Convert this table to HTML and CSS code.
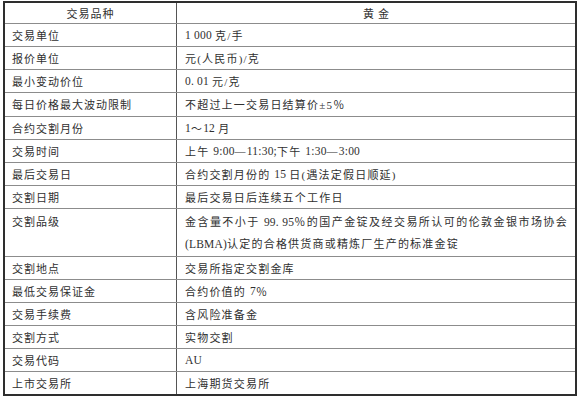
FILE: index.html
```html
<!DOCTYPE html>
<html lang="zh-CN">
<head>
<meta charset="utf-8">
<title>黄金期货合约</title>
<link rel="stylesheet" href="styles.css">
</head>
<body>
<div class="spec">
  <div class="row head"><div class="k">交易品种</div><div class="v gold">黄金</div></div>
  <div class="row"><div class="k">交易单位</div><div class="v"><span class="lat">1 000 </span>克/手</div></div>
  <div class="row"><div class="k">报价单位</div><div class="v">元(人民币)/克</div></div>
  <div class="row"><div class="k">最小变动价位</div><div class="v"><span class="lat">0. 01 </span>元/克</div></div>
  <div class="row"><div class="k">每日价格最大波动限制</div><div class="v">不超过上一交易日结算价±5％</div></div>
  <div class="row"><div class="k">合约交割月份</div><div class="v"><span class="lat">1</span>～<span class="lat">12 </span>月</div></div>
  <div class="row"><div class="k">交易时间</div><div class="v">上午 <span class="lat">9:00</span>—<span class="lat">11:30;</span>下午 <span class="lat">1:30</span>—<span class="lat">3:00</span></div></div>
  <div class="row"><div class="k">最后交易日</div><div class="v">合约交割月份的 <span class="lat">15 </span>日(遇法定假日顺延)</div></div>
  <div class="row"><div class="k">交割日期</div><div class="v">最后交易日后连续五个工作日</div></div>
  <div class="row tall"><div class="k">交割品级</div><div class="v"><span class="line1">金含量不小于 <span class="lat">99. 95</span>％的国产金锭及经交易所认可的伦敦金银市场协会</span><span><span class="lat">(LBMA)</span>认定的合格供货商或精炼厂生产的标准金锭</span></div></div>
  <div class="row"><div class="k">交割地点</div><div class="v">交易所指定交割金库</div></div>
  <div class="row"><div class="k">最低交易保证金</div><div class="v">合约价值的 <span class="lat">7</span>％</div></div>
  <div class="row"><div class="k">交易手续费</div><div class="v">含风险准备金</div></div>
  <div class="row"><div class="k">交割方式</div><div class="v">实物交割</div></div>
  <div class="row"><div class="k">交易代码</div><div class="v"><span class="lat">AU</span></div></div>
  <div class="row"><div class="k">上市交易所</div><div class="v">上海期货交易所</div></div>
</div>
</body>
</html>
```
FILE: styles.css
```css
html, body {
  margin: 0;
  background: #fff;
}
body {
  font-family: "Liberation Serif", "Noto Sans CJK SC", serif;
  font-size: 11px;
  color: #303030;
}
.spec {
  margin: 1px 0 0 3px;
  width: 574px;
  border: 2px solid #2e2e2e;
  box-sizing: border-box;
}
.row {
  display: flex;
  height: 23.15px;
  border-bottom: 1px solid #8c8c8c;
  box-sizing: border-box;
}
.row:last-child {
  border-bottom: none;
  height: 22.15px;
}
.row.head {
  height: 21px;
}
.row.tall {
  height: 47.4px;
}
.k {
  width: 172px;
  flex: none;
  box-sizing: border-box;
  border-right: 1px solid #555;
  padding-left: 7px;
  display: flex;
  align-items: center;
  letter-spacing: 1px;
  white-space: nowrap;
}
.v {
  flex: 1;
  min-width: 0;
  padding: 0 7px 0 8px;
  display: flex;
  align-items: center;
  letter-spacing: 1.2px;
  white-space: pre;
}
.lat {
  letter-spacing: 0.2px;
  font-size: 11.5px;
}
.head .k,
.head .v {
  justify-content: center;
  padding: 0;
}
.head .gold {
  letter-spacing: 4px;
  text-indent: 4px;
}
.tall .k {
  align-items: flex-start;
  padding-top: 2px;
  line-height: 22px;
}
.tall .v {
  flex-direction: column;
  align-items: stretch;
  padding-top: 2px;
  line-height: 22px;
}
.line1 {
  display: block;
  text-align: justify;
  text-align-last: justify;
}
```
